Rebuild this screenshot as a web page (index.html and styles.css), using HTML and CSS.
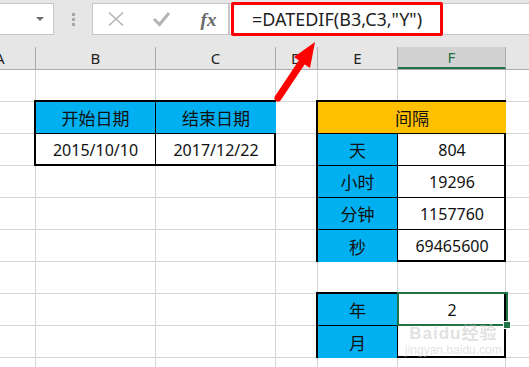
FILE: index.html
```html
<!DOCTYPE html>
<html lang="zh-CN">
<head>
  <meta charset="UTF-8">
  <title>DATEDIF</title>
  <link rel="stylesheet" href="styles.css">
</head>
<body>

  <!-- formula bar -->
  <div class="toolbar">
    <div class="name-box"><span class="caret"></span></div>
    <div class="grip"><i></i><i></i><i></i></div>
    <div class="fn-box">
      <svg class="fn-icon" width="45" height="16" viewBox="0 0 45 16">
        <path d="M15 1.5 L29 14.5 M29 1.5 L15 14.5" stroke="#b4b4b4" stroke-width="1.6" fill="none"/>
      </svg>
      <svg class="fn-icon" width="45" height="16" viewBox="0 0 45 16">
        <path d="M15 8 L20.5 13.5 L30 2" stroke="#b4b4b4" stroke-width="3" fill="none"/>
      </svg>
      <span class="fn-icon fx">fx</span>
    </div>
    <div class="formula">
      <div class="highlight">=DATEDIF(B3,C3,"Y")</div>
    </div>
  </div>

  <!-- column headers -->
  <div class="col-heads">
    <div class="head first">A</div>
    <div class="head">B</div>
    <div class="head">C</div>
    <div class="head">D</div>
    <div class="head">E</div>
    <div class="head active">F</div>
    <div class="head last"></div>
  </div>

  <!-- cells -->
  <div class="sheet">
    <div class="col c1"></div>
    <div class="col c2"></div>
    <div class="col c3"></div>
    <div class="col c4"></div>
    <div class="col c5"></div>
    <div class="col c6"></div>

    <div class="tbl dates">
      <div class="cell blue">开始日期</div>
      <div class="cell blue">结束日期</div>
      <div class="cell">2015/10/10</div>
      <div class="cell">2017/12/22</div>
    </div>

    <div class="tbl interval">
      <div class="cell orange wide">间隔</div>
      <div class="cell blue">天</div>
      <div class="cell">804</div>
      <div class="cell blue">小时</div>
      <div class="cell">19296</div>
      <div class="cell blue">分钟</div>
      <div class="cell">1157760</div>
      <div class="cell blue">秒</div>
      <div class="cell">69465600</div>
    </div>

    <div class="tbl years">
      <div class="cell blue">年</div>
      <div class="cell">2</div>
      <div class="cell blue">月</div>
      <div class="cell"></div>
    </div>

    <div class="selected"><span class="handle"></span></div>
  </div>

  <!-- annotation arrow -->
  <svg class="arrow" width="60" height="70" viewBox="0 0 60 70">
    <path d="M6 60 L30 24" stroke="#ff0000" stroke-width="7" stroke-linecap="round" fill="none"/>
    <polygon points="43,4 38,30 22,19" fill="#ff0000"/>
  </svg>

  <div class="watermark">
    <div class="wm-big">Baidu经验</div>
    <div class="wm-small">jingyan.baidu.com</div>
  </div>

</body>
</html>
```

FILE: styles.css
```css
:root {
  --grid: #d4d4d4;
  --blue: #00b0f0;
  --orange: #ffc000;
  --green: #217346;
}

body {
  margin: 0;
  width: 529px;
  height: 367px;
  overflow: hidden;
  position: relative;
  background: #fff;
  font-family: "Noto Sans", "Noto Sans CJK SC", sans-serif;
  color: #111;
}

/* ---------- formula bar ---------- */
.toolbar {
  height: 47px;
  background: #e6e6e6;
  display: flex;
  align-items: flex-start;
  padding-top: 3px;
  box-sizing: border-box;
}

.name-box {
  width: 54px;
  height: 32px;
  box-sizing: border-box;
  background: #fff;
  border: 1px solid #c6c6c6;
  border-left: none;
  display: flex;
  align-items: center;
  justify-content: flex-end;
  padding-right: 9px;
}

.caret {
  width: 0;
  height: 0;
  border-left: 4px solid transparent;
  border-right: 4px solid transparent;
  border-top: 4px solid #6d6d6d;
}

.grip {
  width: 38px;
  height: 32px;
  display: flex;
  flex-direction: column;
  align-items: center;
  justify-content: center;
  gap: 2px;
}

.grip i {
  width: 3px;
  height: 3px;
  background: #a8a8a8;
}

.fn-box {
  width: 137px;
  height: 32px;
  box-sizing: border-box;
  background: #fff;
  border: 1px solid #c6c6c6;
  display: flex;
  align-items: center;
  padding-left: 1px;
}

.fn-icon {
  width: 45px;
  flex: none;
}

.fn-icon.fx {
  text-align: center;
  font-family: "Liberation Serif", serif;
  font-style: italic;
  font-weight: bold;
  color: #6a6a6a;
  font-size: 19px;
  line-height: 1;
  padding-left: 2px;
}

.formula {
  flex: 1;
  height: 32px;
  box-sizing: border-box;
  background: #fff;
  border: 1px solid #c6c6c6;
  border-right: none;
  padding-left: 1px;
}

.highlight {
  width: 212px;
  height: 34px;
  margin-top: -2px;
  box-sizing: border-box;
  border: 3px solid #ff0000;
  border-radius: 2px;
  font-family: "Noto Sans", sans-serif;
  font-size: 18px;
  line-height: 28px;
  text-align: center;
  color: #222;
}

/* ---------- column headers ---------- */
.col-heads {
  display: grid;
  grid-template-columns: 36px 120px 120px 42px 80px 108px 1fr;
  height: 23px;
  background: #e6e6e6;
  border-bottom: 1px solid #ababab;
  box-sizing: border-box;
}

.head {
  border-right: 1px solid #ababab;
  text-align: center;
  font-size: 15px;
  line-height: 22px;
  color: #222;
  overflow: hidden;
}

.head.first {
  text-align: left;
  text-indent: -5px;
}

.head.active {
  background: #d2d2d2;
  color: var(--green);
  border-bottom: 2px solid var(--green);
  line-height: 20px;
}

.head.last {
  border-right: none;
}

/* ---------- sheet ---------- */
.sheet {
  display: grid;
  grid-template-columns: 36px 120px 120px 42px 80px 108px 1fr;
  grid-template-rows: repeat(9, 32px) 9px;
  background: repeating-linear-gradient(to bottom, #fff 0 31px, var(--grid) 31px 32px);
}

.col {
  grid-row: 1 / -1;
  border-right: 1px solid var(--grid);
}

.c1 { grid-column: 1; }
.c2 { grid-column: 2; }
.c3 { grid-column: 3; }
.c4 { grid-column: 4; }
.c5 { grid-column: 5; }
.c6 { grid-column: 6; }

.tbl {
  display: grid;
  border: 2px solid #000;
  margin: -2px 0 0 -2px;
  background: #fff;
  z-index: 1;
}

.dates {
  grid-column: 2 / 4;
  grid-row: 2 / 4;
  grid-template-columns: 120px 120px;
  grid-template-rows: 32px 32px;
}

.interval {
  grid-column: 5 / 7;
  grid-row: 2 / 7;
  grid-template-columns: 80px 108px;
  grid-template-rows: repeat(5, 32px);
}

.years {
  grid-column: 5 / 7;
  grid-row: 8 / 10;
  grid-template-columns: 80px 108px;
  grid-template-rows: 32px 32px;
}

.cell {
  display: flex;
  align-items: center;
  justify-content: center;
  border-right: 1px solid #000;
  border-bottom: 1px solid #000;
  font-size: 16px;
}

.cell:nth-child(2n) {
  border-right: none;
}

.cell:nth-last-child(-n+2) {
  border-bottom: none;
}

.cell.blue {
  background: var(--blue);
  font-family: "Noto Sans CJK SC", sans-serif;
  font-size: 17px;
}

.cell.orange {
  background: var(--orange);
  font-family: "Noto Sans CJK SC", sans-serif;
  font-size: 17px;
}

.cell.wide {
  grid-column: 1 / -1;
  border-right: none;
}

.interval .cell:nth-child(2n) {
  border-right: 1px solid #000;
}

.interval .cell:nth-child(2n+1) {
  border-right: none;
}

.interval .cell.wide {
  border-right: none;
}

.selected {
  grid-column: 6;
  grid-row: 8;
  margin: -2px -2px 0 -1px;
  border: 2px solid var(--green);
  position: relative;
  z-index: 2;
}

.handle {
  position: absolute;
  right: -5px;
  bottom: -5px;
  width: 6px;
  height: 6px;
  background: var(--green);
  border: 1px solid #fff;
}

/* ---------- overlays ---------- */
.arrow {
  position: absolute;
  left: 272px;
  top: 38px;
}

.watermark {
  position: absolute;
  left: 405px;
  top: 326px;
  z-index: 3;
  white-space: nowrap;
  color: rgba(195, 195, 195, 0.5);
  text-align: center;
  font-family: "Liberation Sans", "Noto Sans CJK SC", sans-serif;
}

.wm-big {
  font-size: 17px;
  font-weight: bold;
  line-height: 16px;
  letter-spacing: 1px;
}

.wm-small {
  font-size: 12px;
  line-height: 16px;
}
```
